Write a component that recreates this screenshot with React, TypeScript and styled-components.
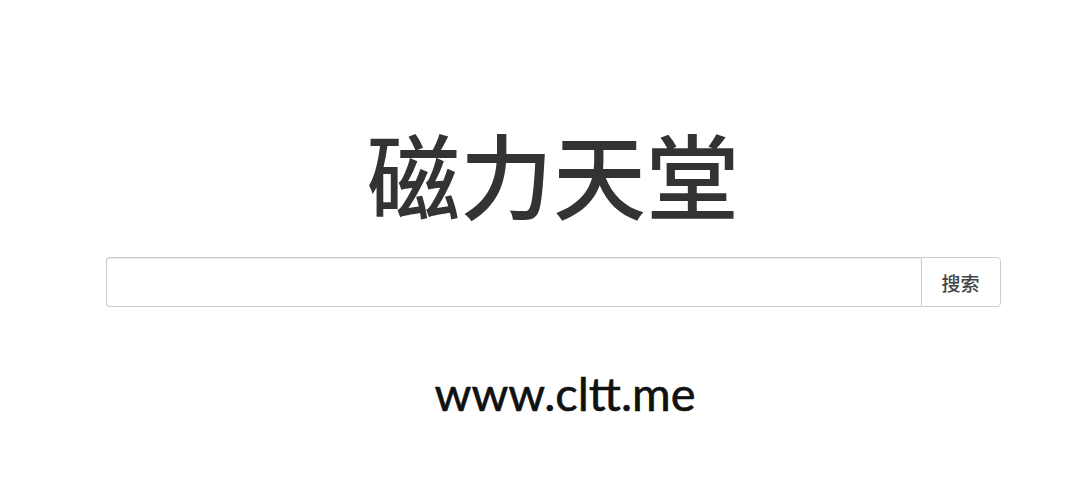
import React from "react";
import styled, { createGlobalStyle } from "styled-components";

const GlobalStyle = createGlobalStyle`
  html, body {
    margin: 0;
    padding: 0;
    background: #fff;
  }
  body {
    font-family: "Helvetica Neue", "Liberation Sans", "Noto Sans CJK SC", sans-serif;
    color: #333;
  }
`;

const Page = styled.div`
  width: 1088px;
  height: 482px;
  display: flex;
  flex-direction: column;
  align-items: center;
  box-sizing: border-box;
  padding: 118px 0 0 18px;
`;

const Title = styled.h1`
  margin: 0;
  font-family: "Noto Sans CJK SC", sans-serif;
  font-size: 93px;
  font-weight: 500;
  line-height: 110px;
  color: #333;
`;

const SearchForm = styled.form`
  margin-top: 29px;
  width: 895px;
  height: 50px;
  display: flex;
`;

const SearchInput = styled.input`
  flex: 1;
  min-width: 0;
  height: 100%;
  box-sizing: border-box;
  border: 1px solid #ccc;
  border-right: none;
  border-radius: 4px 0 0 4px;
  padding: 6px 12px;
  font-size: 18px;
  color: #555;
  outline: none;
  box-shadow: inset 0 1px 1px rgba(0, 0, 0, 0.075);
`;

const SearchButton = styled.button`
  width: 80px;
  height: 100%;
  box-sizing: border-box;
  border: 1px solid #ccc;
  border-radius: 0 4px 4px 0;
  background: #fff;
  font-family: "Noto Sans CJK SC", sans-serif;
  font-size: 19px;
  font-weight: 500;
  color: #444;
  cursor: pointer;
`;

const SiteUrl = styled.p`
  margin: 58px 0 0 24px;
  font-family: Lato, "Open Sans", sans-serif;
  font-size: 47px;
  font-weight: 400;
  line-height: 56px;
  color: #111;
  -webkit-text-stroke: 0.6px #111;
`;

export default function App() {
  return (
    <>
      <GlobalStyle />
      <Page>
        <Title>磁力天堂</Title>
        <SearchForm onSubmit={(e) => e.preventDefault()}>
          <SearchInput type="text" name="keyword" />
          <SearchButton type="submit">搜索</SearchButton>
        </SearchForm>
        <SiteUrl>www.cltt.me</SiteUrl>
      </Page>
    </>
  );
}
